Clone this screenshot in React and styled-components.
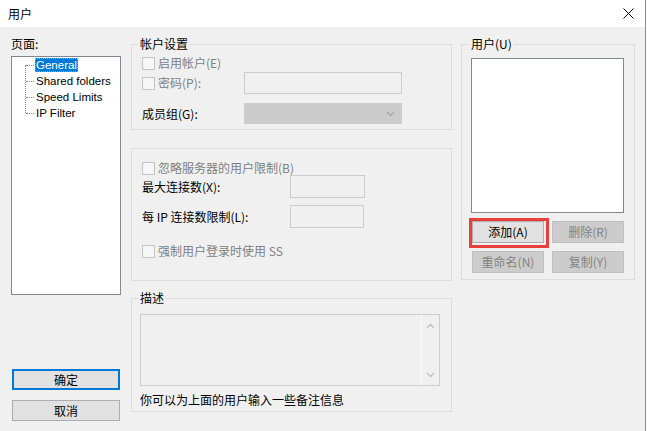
import React from 'react';
import styled, { createGlobalStyle } from 'styled-components';

const GlobalStyle = createGlobalStyle`
  html, body {
    margin: 0;
    padding: 0;
    background: #fff;
  }
  body {
    font-family: "Noto Sans CJK SC", "Liberation Sans", sans-serif;
    font-size: 12px;
    color: #000;
    overflow: hidden;
  }
`;

const Window = styled.div`
  width: 645px;
  height: 431px;
  border-right: 1px solid #8a8a8a;
  background: #f0f0f0;
  display: flex;
  flex-direction: column;
`;

const TitleBar = styled.div`
  height: 27px;
  background: #fff;
  display: flex;
  align-items: center;
  justify-content: space-between;
  padding: 0 11px 0 8px;
  line-height: 14px;
`;

const Body = styled.div`
  flex: 1;
  display: flex;
  align-items: flex-start;
  padding: 10px 0 0 11px;
`;

const LeftCol = styled.div`
  width: 110px;
  display: flex;
  flex-direction: column;
`;

const Caption = styled.div`
  line-height: 14px;
  height: 14px;
`;

const Tree = styled.div`
  margin-top: 5px;
  height: 239px;
  box-sizing: border-box;
  border: 1px solid #828790;
  background: #fff;
  padding-top: 0;
`;

const TreeList = styled.div`
  position: relative;
  &::before {
    content: '';
    position: absolute;
    left: 13px;
    top: 8px;
    height: 48px;
    border-left: 1px dotted #8a8a8a;
  }
`;

const TreeItem = styled.div`
  position: relative;
  height: 16px;
  display: flex;
  align-items: center;
  padding-left: 23px;
  font-family: "Liberation Sans", sans-serif;
  font-size: 11.5px;
  &::before {
    content: '';
    position: absolute;
    left: 14px;
    top: 8px;
    width: 8px;
    border-top: 1px dotted #8a8a8a;
  }
`;

const TreeLabel = styled.span`
  line-height: 14px;
  padding: 0 1px;
  box-sizing: border-box;
  background: ${(p) => (p.$selected ? '#0078d7' : 'transparent')};
  color: ${(p) => (p.$selected ? '#fff' : '#000')};
  outline: ${(p) => (p.$selected ? '1px dotted #f39a2b' : 'none')};
  outline-offset: -1px;
`;

const Button = styled.button`
  box-sizing: border-box;
  font-family: "Noto Sans CJK SC", "Liberation Sans", sans-serif;
  font-size: 12px;
  line-height: 14px;
  padding: 0;
  height: ${(p) => p.$h || 22}px;
  width: ${(p) => p.$w || 72}px;
  background: ${(p) => (p.disabled ? '#cccccc' : '#e1e1e1')};
  color: ${(p) => (p.disabled ? '#838383' : '#000')};
  border: ${(p) => (p.$primary ? '2px solid #0078d7' : p.disabled ? '1px solid #bfbfbf' : '1px solid #adadad')};
  display: flex;
  align-items: center;
  justify-content: center;
`;

const DialogButtons = styled.div`
  margin-top: 74px;
  margin-left: 1px;
  display: flex;
  flex-direction: column;
  gap: 10px;
`;

const MidCol = styled.div`
  width: 321px;
  margin-left: 10px;
  display: flex;
  flex-direction: column;
`;

const RightCol = styled.div`
  width: 174px;
  margin-left: 9px;
`;

const Group = styled.div`
  position: relative;
  box-sizing: border-box;
  border: 1px solid #dcdcdc;
  margin-top: ${(p) => p.$mt || 0}px;
  padding: ${(p) => p.$pad};
`;

const Legend = styled.span`
  position: absolute;
  top: -8px;
  left: ${(p) => p.$left || 6}px;
  padding: 0 2px;
  background: #f0f0f0;
  line-height: 14px;
`;

const Row = styled.div`
  display: flex;
  align-items: center;
  height: ${(p) => p.$h || 14}px;
  margin-top: ${(p) => p.$mt || 0}px;
`;

const Label = styled.span`
  width: ${(p) => p.$w}px;
  line-height: 14px;
  white-space: nowrap;
  color: ${(p) => (p.$disabled ? '#808080' : '#000')};
`;

const CheckLabel = styled.label`
  display: flex;
  align-items: center;
  gap: 3px;
  width: ${(p) => (p.$w ? `${p.$w}px` : 'auto')};
  line-height: 14px;
  white-space: nowrap;
  color: #808080;
`;

const CheckBox = styled.span`
  width: 13px;
  height: 13px;
  box-sizing: border-box;
  border: 1px solid #c4c4c4;
  background: #f6f6f6;
  flex: none;
`;

const TextInput = styled.div`
  box-sizing: border-box;
  width: ${(p) => p.$w}px;
  height: ${(p) => p.$h}px;
  border: 1px solid #cccccc;
  background: #f0f0f0;
`;

const Combo = styled.div`
  box-sizing: border-box;
  width: 158px;
  height: 21px;
  background: #cccccc;
  border: 1px solid #cccccc;
  display: flex;
  align-items: center;
  justify-content: flex-end;
  padding-right: 6px;
`;

const TextArea = styled.div`
  box-sizing: border-box;
  width: 300px;
  height: 72px;
  border: 1px solid #cccccc;
  background: #f0f0f0;
  display: flex;
  justify-content: flex-end;
`;

const ScrollBar = styled.div`
  width: 17px;
  border-left: 1px solid #fafafa;
  display: flex;
  flex-direction: column;
  justify-content: space-between;
  align-items: center;
  padding: 8px 0 7px;
`;

const Note = styled.div`
  margin-top: 7px;
  line-height: 14px;
`;

const ListBox = styled.div`
  box-sizing: border-box;
  width: 153px;
  height: 155px;
  border: 1px solid #828790;
  background: #fff;
`;

const ButtonGrid = styled.div`
  margin-top: 8px;
  margin-left: 1px;
  display: grid;
  grid-template-columns: 72px 72px;
  column-gap: 8px;
  row-gap: 8px;
`;

const Highlight = styled.div`
  position: relative;
  &::after {
    content: '';
    position: absolute;
    top: -3px;
    left: -3px;
    right: -5px;
    bottom: -5px;
    border: 3px solid #e8403a;
    box-sizing: border-box;
    pointer-events: none;
  }
`;

const Chevron = ({ up, color = '#c0c0c0' }) => (
  <svg width="9" height="6" viewBox="0 0 9 6">
    <path
      d={up ? 'M1 5 L4.5 1.5 L8 5' : 'M1 1 L4.5 4.5 L8 1'}
      fill="none"
      stroke={color}
      strokeWidth="1.3"
    />
  </svg>
);

const CloseIcon = () => (
  <svg width="11" height="11" viewBox="0 0 11 11">
    <path d="M0.5 0.5 L10.5 10.5 M10.5 0.5 L0.5 10.5" stroke="#000" strokeWidth="1" />
  </svg>
);

const Check = ({ children, w }) => (
  <CheckLabel $w={w}>
    <CheckBox />
    {children}
  </CheckLabel>
);

const pages = ['General', 'Shared folders', 'Speed Limits', 'IP Filter'];

export default function App() {
  return (
    <>
      <GlobalStyle />
      <Window>
        <TitleBar>
          <span>用户</span>
          <CloseIcon />
        </TitleBar>
        <Body>
          <LeftCol>
            <Caption>页面:</Caption>
            <Tree>
              <TreeList>
                {pages.map((p, i) => (
                  <TreeItem key={p}>
                    <TreeLabel $selected={i === 0}>{p}</TreeLabel>
                  </TreeItem>
                ))}
              </TreeList>
            </Tree>
            <DialogButtons>
              <Button $primary $w={108} $h={21}>确定</Button>
              <Button $w={108} $h={21}>取消</Button>
            </DialogButtons>
          </LeftCol>

          <MidCol>
            <Group $mt={7} $pad="11px 0 5px 10px">
              <Legend>帐户设置</Legend>
              <Row>
                <Check>启用帐户(E)</Check>
              </Row>
              <Row $h={22} $mt={2}>
                <Check w={102}>密码(P):</Check>
                <TextInput $w={158} $h={22} />
              </Row>
              <Row $h={21} $mt={9}>
                <Label $w={102}>成员组(G):</Label>
                <Combo>
                  <Chevron color="#a8a8a8" />
                </Combo>
              </Row>
            </Group>

            <Group $mt={18} $pad="12px 0 22px 10px">
              <Row>
                <Check>忽略服务器的用户限制(B)</Check>
              </Row>
              <Row $h={23}>
                <Label $w={148}>最大连接数(X):</Label>
                <TextInput $w={75} $h={23} />
              </Row>
              <Row $h={23} $mt={7}>
                <Label $w={148}>每 IP 连接数限制(L):</Label>
                <TextInput $w={74} $h={23} />
              </Row>
              <Row $mt={16}>
                <Check>强制用户登录时使用 SS</Check>
              </Row>
            </Group>

            <Group $mt={17} $pad="15px 0 4px 8px">
              <Legend>描述</Legend>
              <TextArea>
                <ScrollBar>
                  <Chevron up />
                  <Chevron />
                </ScrollBar>
              </TextArea>
              <Note>你可以为上面的用户输入一些备注信息</Note>
            </Group>
          </MidCol>

          <RightCol>
            <Group $mt={7} $pad="13px 0 6px 9px">
              <Legend $left={7}>用户(U)</Legend>
              <ListBox />
              <ButtonGrid>
                <Highlight>
                  <Button>添加(A)</Button>
                </Highlight>
                <Button disabled>删除(R)</Button>
                <Button disabled>重命名(N)</Button>
                <Button disabled>复制(Y)</Button>
              </ButtonGrid>
            </Group>
          </RightCol>
        </Body>
      </Window>
    </>
  );
}
